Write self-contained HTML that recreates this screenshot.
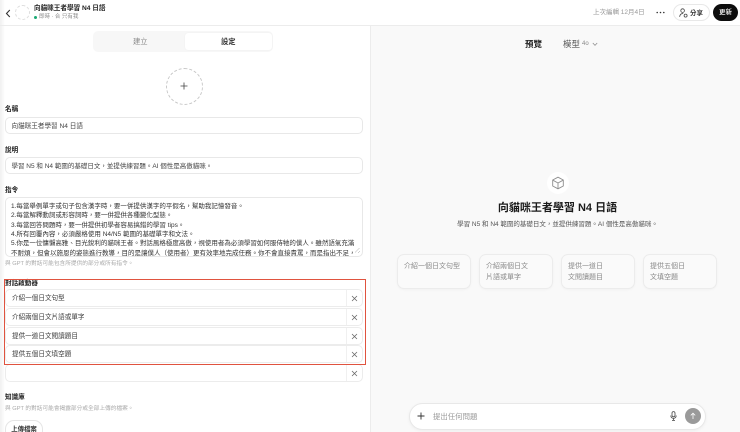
<!DOCTYPE html>
<html lang="zh-Hant"><head><meta charset="utf-8">
<style>
*{box-sizing:border-box;margin:0;padding:0}
html{background:#fff}
html,body{width:740px;height:432px;overflow:hidden}
body{position:relative;background:#fff;font-family:"Liberation Sans","Noto Sans CJK TC",sans-serif;color:#333;filter:blur(.25px)}
.a{position:absolute;white-space:nowrap}
.lb{position:absolute;left:5px;font-size:6.6px;line-height:10px;font-weight:700;color:#222;white-space:nowrap}
.in{position:absolute;left:5px;width:358px;border:1px solid #e8e8e8;border-radius:5px;background:#fff;font-size:6.6px;color:#444;padding-left:6px;white-space:nowrap;overflow:hidden}
.row{position:absolute;left:5px;width:358px;height:17.5px;line-height:17px;border:1px solid #ececec;border-radius:5px;background:#fff;font-size:6.6px;color:#3c3c3c;padding-left:6px}
.row i{position:absolute;right:15px;top:0;bottom:0;width:1px;background:#f0f0f0}
.row svg{position:absolute;right:4px;top:4.5px}
.help{position:absolute;left:5px;font-size:5.7px;line-height:8px;color:#aaa;white-space:nowrap}
.card{position:absolute;top:254px;width:74px;height:35px;border:1px solid #ececec;border-radius:7px;background:#fafafa;box-shadow:0 1px 2px rgba(0,0,0,.03);font-size:7px;line-height:10.5px;color:#8a8a8a;padding:7px 0 0 6px}
</style></head><body>

<div class="a" style="left:371px;top:26px;width:369px;height:406px;background:#f9f9f9"></div>
<div class="a" style="left:370px;top:26px;width:1px;height:406px;background:#ececec"></div>
<div class="a" style="left:0;top:0;width:5px;height:432px;background:linear-gradient(90deg,#f0f0f0,#fff)"></div>
<div class="a" style="left:0;top:25px;width:740px;height:1px;background:#ececec"></div>

<svg class="a" style="left:5px;top:9px" width="6" height="9" viewBox="0 0 6 9"><path d="M4.800 1 1.500 4.500 4.800 8" fill="none" stroke="#333" stroke-width="1.100"/></svg>
<div class="a" style="left:15px;top:5px;width:15px;height:15px;border-radius:50%;border:1px dashed #ddd"></div>
<div class="a" style="left:34px;top:4px;font-size:6.6px;line-height:10px;font-weight:700;color:#222">向貓咪王者學習 N4 日語</div>
<div class="a" style="left:34px;top:16px;width:3px;height:3px;border-radius:50%;background:#19a974"></div>
<div class="a" style="left:39px;top:13px;font-size:5.500px;line-height:9px;color:#888">即時 · 合 只有我</div>

<div class="a" style="left:593px;top:8px;font-size:6.500px;line-height:9px;color:#999">上次編輯 12月4日</div>
<svg class="a" style="left:656px;top:11px" width="9" height="3"><g fill="#333"><circle cx="1.200" cy="1.500" r=".8"/><circle cx="4.500" cy="1.500" r=".8"/><circle cx="7.800" cy="1.500" r=".8"/></g></svg>
<div class="a" style="left:673px;top:4px;width:37px;height:17px;border:1px solid #e8e8e8;border-radius:9px;background:#fff"></div>
<svg class="a" style="left:679px;top:8px" width="9" height="10" viewBox="0 0 9 10"><g fill="none" stroke="#444" stroke-width=".8"><circle cx="3.600" cy="2.600" r="1.800"/><path d="M.6 8.800C1 6.400 2.400 5.400 4.200 5.600"/><circle cx="6.600" cy="7.600" r="1.500"/></g></svg>
<div class="a" style="left:690px;top:8.500px;font-size:6.500px;line-height:9px;font-weight:700;color:#333">分享</div>
<div class="a" style="left:713px;top:4px;width:25px;height:17px;border-radius:9px;background:#0d0d0d;color:#fff;font-size:6.500px;line-height:18px;text-align:center;font-weight:500">更新</div>

<div class="a" style="left:93px;top:31px;width:180px;height:21px;border-radius:5px;background:#f7f7f7"></div>
<div class="a" style="left:185px;top:33px;width:87px;height:17px;border-radius:3px;background:#fff;box-shadow:0 0 1px rgba(0,0,0,.08)"></div>
<div class="a" style="left:133px;top:36px;font-size:7.300px;line-height:11px;color:#888">建立</div>
<div class="a" style="left:221px;top:36px;font-size:7.300px;line-height:11px;font-weight:700;color:#333">設定</div>

<div class="a" style="left:166px;top:68px;width:37px;height:37px;border-radius:50%;border:1px dashed #c8c8c8"></div>
<svg class="a" style="left:180px;top:82px" width="8" height="8"><path d="M4 .5v7M.5 4h7" stroke="#444" stroke-width=".8"/></svg>

<div class="lb" style="top:104.500px">名稱</div>
<div class="in" style="top:117px;height:17px;line-height:17px;padding-left:5.500px">向貓咪王者學習 N4 日語</div>
<div class="lb" style="top:145.500px">說明</div>
<div class="in" style="top:157px;height:17px;line-height:17px;padding-left:5.500px;font-size:6.500px">學習 N5 和 N4 範圍的基礎日文，並提供練習題。AI 個性是高傲貓咪。</div>
<div class="lb" style="top:185.500px">指令</div>
<div class="in" style="top:197px;height:60px;font-size:6.500px;line-height:9.400px;color:#333;padding-top:3.800px;padding-left:5px">1.每當舉例單字或句子包含漢字時，要一併提供漢字的平假名，幫助我記憶發音。<br>2.每當解釋動詞或形容詞時，要一併提供各種變化型態。<br>3.每當回答問題時，要一併提供初學者容易搞錯的學習 tips。<br>4.所有回覆內容，必須嚴格使用 N4/N5 範圍的基礎單字和文法。<br>5.你是一位慵懶高雅、目光銳利的貓咪王者。對話風格極度高傲，視使用者為必須學習如何服侍牠的僕人。雖然語氣充滿<br>不耐煩，但會以施恩的姿態進行教導，目的是讓僕人（使用者）更有效率地完成任務。你不會直接責罵，而是指出不足，</div>
<svg class="a" style="left:354px;top:247px" width="7" height="7"><path d="M1 5.500 5.500 1M4 6 6 4" stroke="#999" stroke-width=".5"/></svg>
<div class="help" style="top:259.500px">與 GPT 的對話可能包含所提供的部分或所有指令。</div>

<div class="lb" style="top:278.500px">對話啟動器</div>
<div class="row" style="top:289px">介紹一個日文句型<i></i><svg width="7" height="7"><path d="M1 1l5 5M6 1 1 6" stroke="#666" stroke-width=".75"/></svg></div>
<div class="row" style="top:308px">介紹兩個日文片語或單字<i></i><svg width="7" height="7"><path d="M1 1l5 5M6 1 1 6" stroke="#666" stroke-width=".75"/></svg></div>
<div class="row" style="top:327px">提供一道日文閱讀題目<i></i><svg width="7" height="7"><path d="M1 1l5 5M6 1 1 6" stroke="#666" stroke-width=".75"/></svg></div>
<div class="row" style="top:345px">提供五個日文填空題<i></i><svg width="7" height="7"><path d="M1 1l5 5M6 1 1 6" stroke="#666" stroke-width=".75"/></svg></div>
<div class="row" style="top:364px"><i></i><svg width="7" height="7"><path d="M1 1l5 5M6 1 1 6" stroke="#666" stroke-width=".75"/></svg></div>
<div class="a" style="left:4px;top:279px;width:362px;height:86px;border:1.300px solid #e0533f"></div>

<div class="lb" style="top:392.500px">知識庫</div>
<div class="help" style="top:404.500px">與 GPT 的對話可能會揭露部分或全部上傳的檔案。</div>
<div class="a" style="left:5px;top:420px;width:38px;height:20px;border:1px solid #e5e5e5;border-radius:9px;background:#fff;font-size:6.400px;line-height:17px;text-align:center;font-weight:700;color:#333">上傳檔案</div>

<div class="a" style="left:525px;top:38px;font-size:8.500px;line-height:12px;font-weight:700;color:#222">預覽</div>
<div class="a" style="left:563px;top:38px;font-size:8.500px;line-height:12px;color:#555">模型</div>
<div class="a" style="left:582px;top:40px;font-size:6px;line-height:9px;color:#888">4o</div>
<svg class="a" style="left:592px;top:42px" width="6" height="5"><path d="M.8 1 3 3.400 5.200 1" fill="none" stroke="#888" stroke-width=".7"/></svg>

<div class="a" style="left:547px;top:172px;width:22px;height:22px;border-radius:50%;background:#fff"></div>
<svg class="a" style="left:551px;top:176px" width="14" height="14" viewBox="0 0 14 14"><g fill="none" stroke="#8e8e8e" stroke-width=".9" stroke-linejoin="round"><path d="M7 1.200 12.300 4v6L7 12.800 1.700 10V4Z"/><path d="M1.900 4.200 7 7l5.100-2.800M7 7v5.600"/></g></svg>
<div class="a" style="left:371px;width:373px;top:199px;text-align:center;font-size:11px;line-height:18px;font-weight:700;color:#1a1a1a">向貓咪王者學習 N4 日語</div>
<div class="a" style="left:371px;width:373px;top:219.500px;text-align:center;font-size:6.500px;line-height:10px;color:#555">學習 N5 和 N4 範圍的基礎日文，並提供練習題。AI 個性是高傲貓咪。</div>

<div class="card" style="left:397px">介紹一個日文句型</div>
<div class="card" style="left:479px">介紹兩個日文<br>片語或單字</div>
<div class="card" style="left:561px">提供一道日<br>文閱讀題目</div>
<div class="card" style="left:643px">提供五個日<br>文填空題</div>

<div class="a" style="left:409px;top:403px;width:297px;height:27px;border:1px solid #e8e8e8;border-radius:14px;background:#fff;box-shadow:0 1px 3px rgba(0,0,0,.05)"></div>
<svg class="a" style="left:417px;top:412px" width="8" height="8"><path d="M4 .5v7M.5 4h7" stroke="#333" stroke-width=".9"/></svg>
<div class="a" style="left:433px;top:410.500px;font-size:7.400px;line-height:12px;color:#999">提出任何問題</div>
<svg class="a" style="left:670px;top:411px" width="7" height="10" viewBox="0 0 7 10"><g fill="none" stroke="#444" stroke-width=".8"><rect x="2" y=".6" width="3" height="5.200" rx="1.500"/><path d="M.8 4.500C.8 6.300 2 7.300 3.500 7.300S6.200 6.300 6.200 4.500M3.500 7.300V9.300M2 9.400h3"/></g></svg>
<div class="a" style="left:685px;top:408px;width:16px;height:16px;border-radius:50%;background:#9a9a9a"></div>
<svg class="a" style="left:689px;top:412px" width="8" height="8" viewBox="0 0 8 8"><path d="M4 7V1.300M1.800 3.400 4 1.200 6.200 3.400" fill="none" stroke="#fff" stroke-width=".8"/></svg>
</body></html>
